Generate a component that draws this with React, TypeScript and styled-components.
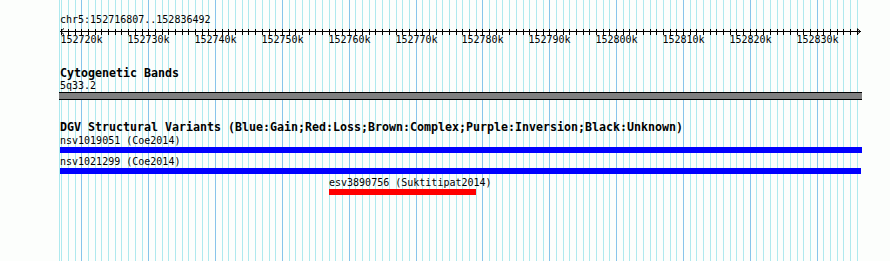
import React from "react";
import styled, { createGlobalStyle } from "styled-components";

const START = 152716807;
const END = 152836492;
const PAD_LEFT = 60;
const TRACK_WIDTH = 800;
const TRACK_RIGHT = 862;
const WIDTH = 890;
const HEIGHT = 261;

const toX = (pos: number) =>
  PAD_LEFT + ((pos - START) * TRACK_WIDTH) / (END - START);

const clipX = (x: number) => Math.min(Math.max(x, PAD_LEFT), TRACK_RIGHT);

const kbSteps: number[] = [];
for (let k = Math.ceil(START / 1000); k <= Math.floor(END / 1000); k++) {
  kbSteps.push(k);
}

const variants = [
  { id: "nsv1019051", study: "Coe2014", start: 152700000, end: 152900000, color: "#0000ff" },
  { id: "nsv1021299", study: "Coe2014", start: 152700000, end: 152836600, color: "#0000ff" },
  { id: "esv3890756", study: "Suktitipat2014", start: 152757050, end: 152779050, color: "#ff0000" },
];

const GlobalStyle = createGlobalStyle`
  html, body {
    margin: 0;
    padding: 0;
    background: #fcfefc;
  }
`;

const Panel = styled.div`
  position: relative;
  width: ${WIDTH}px;
  height: ${HEIGHT}px;
  overflow: hidden;
  background: #fcfefc;
  color: #000;
  font-family: "DejaVu Sans Mono", "Liberation Mono", monospace;
`;

const GridLayer = styled.svg`
  position: absolute;
  left: 0;
  top: 0;
`;

const Tracks = styled.div`
  position: relative;
  display: flex;
  flex-direction: column;
`;

const Segment = styled.div`
  margin-top: 14px;
  padding-left: ${PAD_LEFT}px;
  height: 12px;
  font-size: 10px;
  line-height: 12px;
  white-space: pre;
`;

const RulerSvg = styled.svg`
  display: block;
`;

const TrackTitle = styled.div<{ $gap: number }>`
  margin-top: ${(p) => p.$gap}px;
  padding-left: ${PAD_LEFT}px;
  height: 13px;
  font-size: 11.63px;
  font-weight: bold;
  line-height: 13px;
  white-space: pre;
`;

const FeatureLabel = styled.div`
  height: 12px;
  font-size: 10px;
  line-height: 12px;
  white-space: pre;
`;

const BandLabel = styled(FeatureLabel)`
  padding-left: ${PAD_LEFT}px;
`;

const BandBar = styled.div`
  margin-left: 59px;
  width: ${TRACK_RIGHT - 59}px;
  height: 6px;
  background: #808080;
  border-top: 1px solid #000;
  border-bottom: 1px solid #000;
`;

const FeatureRow = styled.div`
  display: flex;
  flex-direction: column;
  align-items: flex-start;
  padding-bottom: 3px;
`;

const FeatureBar = styled.div<{ $color: string }>`
  height: 6px;
  background: ${(p) => p.$color};
`;

const Grid = () => (
  <GridLayer width={WIDTH} height={HEIGHT} shapeRendering="crispEdges">
    <rect x={59} y={0} width={1} height={HEIGHT} fill="#aee9ee" />
    {kbSteps.map((k) => (
      <rect
        key={k}
        x={Math.round(toX(k * 1000))}
        y={0}
        width={1}
        height={HEIGHT}
        fill={k % 10 === 0 ? "#87c5ea" : "#aee9ee"}
      />
    ))}
  </GridLayer>
);

const Ruler = () => {
  const left = PAD_LEFT;
  const right = Math.round(toX(END));
  return (
    <RulerSvg width={WIDTH} height={20}>
      <g shapeRendering="crispEdges" stroke="#000" strokeWidth={1}>
        <line x1={left} y1={5.5} x2={right + 1} y2={5.5} />
        {kbSteps.map((k) => {
          const x = Math.round(toX(k * 1000)) + 0.5;
          return <line key={k} x1={x} y1={3} x2={x} y2={k % 10 === 0 ? 10 : 9} />;
        })}
      </g>
      <g stroke="#000" strokeWidth={1} fill="none">
        <polyline points={`${left + 4},2.5 ${left + 0.5},5.5 ${left + 4},8.5`} />
        <polyline points={`${right - 3},2.5 ${right + 0.5},5.5 ${right - 3},8.5`} />
      </g>
      <g fontFamily='"DejaVu Sans Mono", "Liberation Mono", monospace' fontSize={10} fill="#000">
        {kbSteps
          .filter((k) => k % 10 === 0)
          .map((k) => (
            <text key={k} x={Math.round(toX(k * 1000)) + 0.5} y={17} textAnchor="middle">
              {k}k
            </text>
          ))}
      </g>
    </RulerSvg>
  );
};

export default function App() {
  return (
    <>
      <GlobalStyle />
      <Panel>
        <Grid />
        <Tracks>
          <Segment>chr5:152716807..152836492</Segment>
          <Ruler />
          <TrackTitle $gap={21}>Cytogenetic Bands</TrackTitle>
          <BandLabel>5q33.2</BandLabel>
          <BandBar />
          <TrackTitle $gap={21} style={{ marginBottom: 1 }}>
            DGV Structural Variants (Blue:Gain;Red:Loss;Brown:Complex;Purple:Inversion;Black:Unknown)
          </TrackTitle>
          {variants.map((v) => {
            const x0 = Math.round(clipX(toX(v.start)));
            const x1 = Math.round(clipX(toX(v.end)));
            return (
              <FeatureRow key={v.id} style={{ marginLeft: x0 }}>
                <FeatureLabel>
                  {v.id} ({v.study})
                </FeatureLabel>
                <FeatureBar $color={v.color} style={{ width: x1 - x0 }} />
              </FeatureRow>
            );
          })}
        </Tracks>
      </Panel>
    </>
  );
}
